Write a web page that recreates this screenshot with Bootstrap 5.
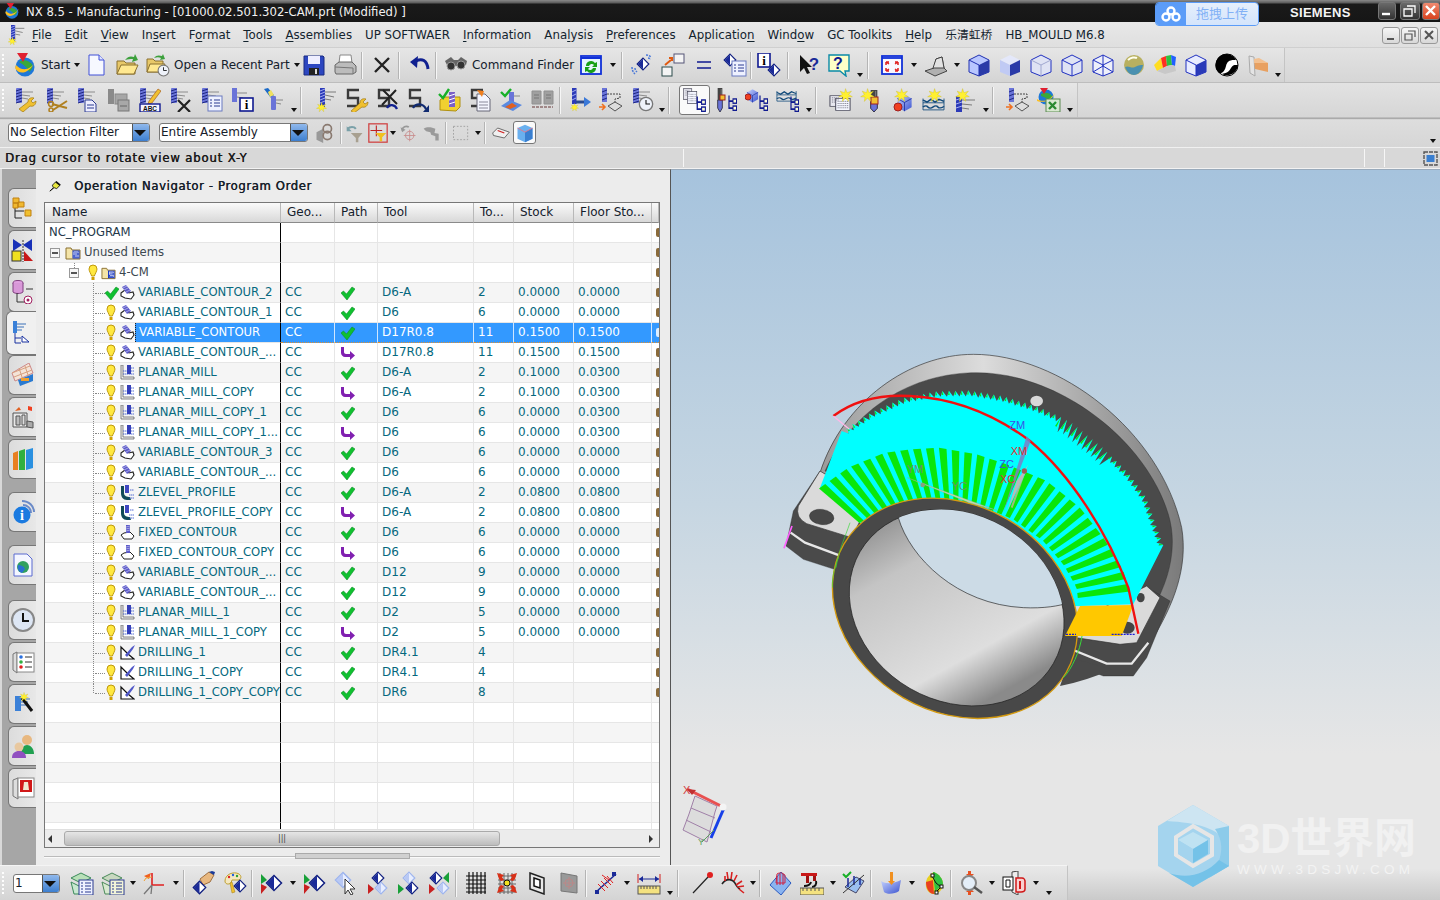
<!DOCTYPE html>
<html lang="en">
<head>
<meta charset="UTF-8">
<title>NX 8.5 - Manufacturing</title>
<link href="https://cdn.jsdelivr.net/npm/bootstrap@5.3.3/dist/css/bootstrap.min.css" rel="stylesheet">
<style>
  html, body { height: 900px; overflow: hidden; }
  body { font-family: "DejaVu Sans", "Noto Sans CJK SC", sans-serif; font-size: 11.65px; color: #222; background: #e2e2e2; position: relative; line-height: 1.2; }
  .shell { width: 1440px; height: 900px; }

  /* title bar */
  .titlebar { height: 22px; background: linear-gradient(#8a8a8a 0, #5a5a5a 3px, #1a1a1a 4px, #161616 100%); color: #f2f2f2; padding-left: 4px; position: relative; }
  .titlebar .ttl { margin-left: 6px; padding-top: 2px; }
  .baidu { position: absolute; left: 1155px; top: 2px; width: 104px; height: 24px; border-radius: 4px; overflow: hidden; border: 1px solid #5b9cf8; z-index: 5; }
  .baidu-ic { width: 30px; background: #5b9cf8; }
  .baidu-tx { background: linear-gradient(#e6effc, #d4e4fb); color: #82b1f6; font-size: 13px; }
  .brand { position: absolute; left: 1290px; top: 5px; font-family: "Liberation Sans", sans-serif; font-weight: 700; font-size: 13px; letter-spacing: .3px; color: #f4f4f4; }
  .winbtn { position: absolute; top: 2px; height: 18px; border-radius: 3px; background: linear-gradient(#6a6a6a, #333); border: 1px solid #777; }
  .winbtn.red { background: linear-gradient(#f08a70, #d8421e); }

  /* menu */
  .menubar { height: 26px; background: linear-gradient(#e8e8e8, #dfdfdf); border-bottom: 1px solid #cfcfcf; color: #13232e; padding: 1px 0 0 5px; position: relative; gap: 13px; font-size: 11.82px; }
  .menubar u { text-underline-offset: 2px; }
  .menu-ic { width: 22px; margin-right: -8px; }
  .mdi { position: absolute; top: 5px; width: 18px; height: 17px; border: 1px solid #999; border-radius: 3px; background: linear-gradient(#f6f6f6, #d8d8d8); }

  /* toolbars */
  .tb-row { height: 35px; background: linear-gradient(#e2e2e2, #d6d6d6); border-bottom: 1px solid #bdbdbd; }
  .tb-row.low { box-shadow: 0 1px 1px #aaa; position: relative; z-index: 1; height: 35px; }
  .tb { height: 100%; padding-left: 9px; border-right: 1px solid #c4c4c4; background: linear-gradient(#e6e6e6, #d4d4d4); position: relative; }
  .tb-grip { position: absolute; left: 2px; top: 6px; bottom: 6px; width: 3px; border-left: 2px dotted #fdfdfd; }
  .tbtn { width: 31px; height: 31px; flex: none; display: flex; align-items: center; justify-content: center; }
  .tbtn svg { width: 24px; height: 24px; }
  .tbtn.on { background: #fafafa; border: 1px solid #777; border-radius: 3px; height: 30px; }
  .tlabel { flex: none; color: #14202c; white-space: nowrap; font-size: 12px; letter-spacing: -.02px; }
  .tcaret { flex: none; display: flex; justify-content: center; align-items: flex-end; height: 24px; padding-bottom: 0; }
  .tcaret.mid { align-items: center; height: auto; }
  .tcaret::after { content: ""; border: 3.5px solid transparent; border-top: 4px solid #111; border-bottom: 0; }
  .tsep { flex: none; width: 6px; height: 27px; position: relative; }
  .tsep::after { content: ""; position: absolute; left: 2px; top: 0; bottom: 0; border-left: 1px solid #f6f6f6; box-shadow: -1px 0 0 #b4b4b4; }
  .w3 { width: 3px; } .w3::after { left: 1px; }
  .w8 { width: 8px; } .w8::after { left: 4px; }

  /* selection bar */
  .selbar { height: 30px; background: linear-gradient(#dedede, #d6d6d6); border-bottom: 1px solid #f0f0f0; padding-left: 8px; }
  .combo { height: 19px; background: #fff; border: 1px solid #777; border-radius: 3px; position: relative; padding: 0 1px; line-height: 17px; color: #16202a; overflow: hidden; font-size: 12px; }
  .combo::after { content: ""; position: absolute; right: 0; top: 0; bottom: 0; width: 17px; background: linear-gradient(#8fb8ec, #3d7fd0); border-left: 1px solid #555; }
  .combo::before { content: ""; position: absolute; right: 3px; top: 6px; z-index: 1; border: 6px solid transparent; border-top: 6px solid #111; border-bottom: 0; }
  .sbtn { height: 25px; flex: none; display: flex; align-items: center; justify-content: center; }
  .sbtn svg { width: 20px; height: 20px; }
  .sbtn.on { background: #fafafa; border: 1px solid #777; border-radius: 3px; height: 23px; }

  /* cue line */
  .cuebar { height: 21px; background: #d8d8d8; border-bottom: 1px solid #f2f2f2; padding-left: 5px; position: relative; }
  .cue { color: #1a1a1a; text-shadow: .4px 0 0 #1a1a1a; letter-spacing: .86px; }
  .cdiv { position: absolute; top: 1px; bottom: 1px; border-left: 1px solid #f6f6f6; }

  /* left strip */
  .main-row { height: 696px; }
  .side-strip { width: 36px; flex: none; background: #a6a6a6; border-left: 2px solid #d8d8d8; padding-top: 19px; }
  .stab { height: 40px; margin: 0 0 2px 6px; width: 28px; background: linear-gradient(90deg, #dcdcdc, #e8e8e8); border: 1px solid #777; border-right: 0; border-radius: 6px 0 0 6px; display: flex; align-items: center; justify-content: center; flex: none; }
  .stab svg { width: 24px; height: 24px; }
  .stab.active { width: 30px; margin: -3px 0 0 4px; height: 44px; background: #f0f0f0; }
  .stab.gap { margin-top: 11px; }
  .stab.gap2 { margin-top: 13px; }

  /* navigator panel */
  .nav-panel { width: 635px; flex: none; background: #ececec; border-right: 1px solid #555; border-top: 1px solid #999; padding: 0 10px 0 8px; }
  .nav-head { height: 32px; padding-left: 5px; }
  .nav-head b { font-weight: 400; text-shadow: .4px 0 0 #1a1a1a; color: #14202c; letter-spacing: .62px; margin-left: 13px; }
  .nav-frame { height: 646px; width: 616px; border: 1px solid #777; background: #fff; }
  .nav-scroll { height: 626px; overflow: hidden; }
  table.op-grid { table-layout: fixed; width: 614px; margin: 0; border-collapse: separate; border-spacing: 0; color: #05687e; font-size: 12px; }
  .op-grid th { height: 20px; padding: 0 0 0 6px; font-weight: 400; color: #14202c; vertical-align: middle; background: linear-gradient(#fafafa, #e6e6e6 60%, #d8d8d8); border-right: 1px solid #b8b8b8; border-bottom: 1px solid #8a8a8a; overflow: hidden; }
  .op-grid th:first-child { padding-left: 7px; }
  .op-grid td { height: 20px; padding: 0 0 0 4px; border-right: 1px solid #e6e6e6; border-bottom: 1px solid #e6e6e6; background: #fff; white-space: nowrap; overflow: hidden; position: relative; line-height: 19px; vertical-align: middle; }
  .op-grid tbody tr:nth-child(even) td { background: #f5f5f5; }
  .op-grid td.name { border-right: 1px solid #000; padding: 0; overflow: visible; font-size: 11.65px; }
  .op-grid td.ctr { padding-left: 6px; }
  .op-grid td.ctr svg { width: 14px; height: 14px; display: block; }
  .op-grid tbody tr.sel td { background: #3399ff; color: #fff; border-right-color: #cfe6ff; border-bottom: 1px dotted #e09030; }
  .op-grid tbody tr.sel td.name { background: #f5f5f5; border-bottom: 1px solid #e6e6e6; border-right-color: #000; }
  .nm { height: 19px; color: #05687e; }
  .hl { background: #3399ff; color: #fff; align-self: stretch; flex: 1; padding-left: 3px; margin-left: 0; border-left: 1px dotted #222; }
  .nm svg { flex: none; display: block; }
  .expd { width: 10px; height: 10px; flex: none; border: 1px solid #999; background: #f7f7f7; position: relative; }
  .expd::after { content: ""; position: absolute; left: 1px; right: 1px; top: 3px; border-top: 2px solid #555; }
  .lv3::before, .lv3::after, .lvc::after, .lvb::after { content: ""; position: absolute; }
  .lv3::before { left: 48px; top: 0; bottom: 0; border-left: 1px dotted #888; }
  .lv3.last::before { bottom: 50%; }
  .lv3::after { left: 50px; width: 10px; top: 50%; border-top: 1px dotted #888; }
  .lvb::after { left: 29px; top: 0; height: 5px; border-left: 1px dotted #888; }
  .endcap { display: block; width: 3px; height: 9px; margin: 0 0 0 -1px; border-radius: 2px 0 0 2px; background: #8a6a3a; }
  .sel .endcap { background: #ddeeff; }
  .op-grid td.endc { padding: 0 0 0 5px; border-right: 0; }

  .hscroll { height: 18px; background: #ececec; border-top: 1px solid #e0e0e0; position: relative; }
  .hthumb { position: absolute; left: 19px; width: 436px; top: 1px; bottom: 1px; border: 1px solid #aaa; border-radius: 3px; background: linear-gradient(#e6e6e6, #bdbdbd); font-size: 8px; text-align: center; line-height: 13px; color: #444; }
  .harr { position: absolute; top: 5px; border: 4px solid transparent; }
  .splitter { height: 17px; padding-top: 5px; position: relative; }
  .splitter::before { content: ""; position: absolute; left: 0; right: 0; top: 8px; border-top: 1px solid #bbb; border-bottom: 1px solid #fafafa; }
  .split-grip { position: absolute; left: 251px; width: 115px; height: 6px; top: 5px; background: #d0d0d0; border: 1px solid #aaa; }

  /* graphics window */
  .viewport { flex: 1; position: relative; background: linear-gradient(#a6c3dd, #c6d6e2 48%, #e6e6e6 84%); overflow: hidden; border-top: 1px solid #9ab; }
  .model { position: absolute; left: 99px; top: 171px; width: 420px; height: 390px; }
  .triad { position: absolute; left: 10px; top: 612px; width: 58px; height: 64px; }

  /* bottom */
  .bottom-row { height: 35px; }
  .bottom-tb { width: 1068px; flex: none; background: linear-gradient(#e8e8e8, #d4d4d4); border-top: 1px solid #f4f4f4; border-right: 1px solid #c4c4c4; padding-left: 13px; position: relative; }
  .bottom-rest { flex: 1; background: linear-gradient(#e6e6e6 10%, #cacaca); }
  .combo-s { width: 47px; margin-right: 6px; flex: none; }
  .watermark { position: absolute; left: 1157px; top: 805px; width: 270px; height: 84px; z-index: 4; pointer-events: none; }
  .wm-title { font-family: "Liberation Sans", "Noto Sans CJK SC", sans-serif; font-weight: 700; font-size: 42px; line-height: 46px; color: #f1f1f1; letter-spacing: -.2px; white-space: nowrap; }
  .wm-sub { font-family: "Liberation Sans", sans-serif; font-size: 13.5px; color: #f3f3f3; letter-spacing: 4.3px; white-space: nowrap; line-height: 16px; margin-top: 0; }
</style>
</head>
<body>

<svg width="0" height="0" class="position-absolute">
  <defs>
    <linearGradient id="gBlue" x1="0" y1="0" x2="1" y2="1"><stop offset="0" stop-color="#c7d4ff"/><stop offset="1" stop-color="#3c54d0"/></linearGradient>
    <linearGradient id="gYel" x1="0" y1="0" x2="1" y2="1"><stop offset="0" stop-color="#fff3b0"/><stop offset="1" stop-color="#e8b830"/></linearGradient>
    <linearGradient id="gGray" x1="0" y1="0" x2="1" y2="0"><stop offset="0" stop-color="#9a9a9a"/><stop offset=".45" stop-color="#dcdcdc"/><stop offset="1" stop-color="#7a7a7a"/></linearGradient>
    <linearGradient id="gBore" x1="0" y1="0" x2="1" y2=".5"><stop offset="0" stop-color="#777"/><stop offset=".35" stop-color="#c4c4c4"/><stop offset=".8" stop-color="#dedede"/><stop offset="1" stop-color="#8a8a8a"/></linearGradient>

    <!-- parts -->
    <symbol id="p-drill" viewBox="0 0 24 24"><rect x="3" y="0" width="6" height="15" rx="1" fill="#6a74d8"/><path d="M3 3l6-2M3 6l6-2M3 9l6-2M3 12l6-2M3 15l6-2" stroke="#1d2680"/><path d="M9 4h11M9 7l8 1M9 10l6 1" stroke="#8c8c8c"/></symbol>
    <symbol id="p-star" viewBox="0 0 24 24"><path d="M12 1l2.500 6.500 7-2.500-4.500 5.500 6 3.500-7 .5 1 7-5-5.500-5 5.500 1-7-7-.5 6-3.500L3.500 5l7 2.500z" fill="#fff030" stroke="#c8b820" stroke-width=".6"/></symbol>
    <symbol id="p-tree" viewBox="0 0 24 24" preserveAspectRatio="none"><path d="M6 2v18h8M6 10h8" fill="none" stroke="#101a90" stroke-width="2.400"/><rect x="14" y="7" width="7" height="6" fill="#ffffd8" stroke="#101a90" stroke-width="2"/><rect x="14" y="17" width="7" height="6" fill="#ffffd8" stroke="#101a90" stroke-width="2"/></symbol>
    <symbol id="p-s" viewBox="0 0 24 24"><path d="M14 2H3v8h10v8H2" fill="none" stroke="#3a3a3a" stroke-width="2.400"/></symbol>
    <symbol id="p-dia" viewBox="0 0 24 24"><path d="M12 2l10 10-10 10L2 12z" fill="#fff" stroke="#101f80" stroke-width="2"/><path d="M12 3L3 12l9 9z" fill="#1a2a98"/></symbol>
    <symbol id="p-dial" viewBox="0 0 24 24"><path d="M12 2l10 10-10 10L2 12z" fill="#e8eeff" stroke="#9db4ee" stroke-width="2"/><path d="M12 3L3 12l9 9z" fill="#b8c8f4"/></symbol>
    <symbol id="p-clock" viewBox="0 0 24 24"><circle cx="12" cy="12" r="10" fill="#eef2fa" stroke="#777" stroke-width="2"/><path d="M12 6v6h6" fill="none" stroke="#111" stroke-width="1.600"/></symbol>
    <symbol id="p-docs" viewBox="0 0 24 24" preserveAspectRatio="none"><rect x="1" y="1" width="13" height="15" fill="#e8e8f0" stroke="#445"/><rect x="7" y="5" width="15" height="17" fill="#f4f6ff" stroke="#445"/><path d="M3 4h8M3 7h8M3 10h3M9 9h11M9 12h11M9 15h11M9 18h11" stroke="#556" stroke-dasharray="1 1"/></symbol>
    <symbol id="p-tool" viewBox="0 0 24 24" preserveAspectRatio="none"><path d="M8 12h8v8l-4 4-4-4z" fill="#6a74d8" stroke="#223"/><rect x="8" y="0" width="8" height="12" fill="#444"/><path d="M14 1v10" stroke="#888"/></symbol>
    <symbol id="p-cube" viewBox="0 0 24 24"><path d="M3 7l9-5 9 5v11l-9 5-9-5z" fill="url(#gBlue)"/><path d="M3 7l9 5 9-5M12 12v11" stroke="#1a2a98" fill="none"/></symbol>
    <symbol id="p-wave" viewBox="0 0 24 24" preserveAspectRatio="none"><path d="M1 7l4 3 4-4 4 4 4-4 5 3M1 17q3-3 5 0t5 0 5 0 6-1" fill="none" stroke="#114a7a" stroke-width="1.800"/><path d="M1 11h21M1 21h21M1 5v16M22 5v16" stroke="#114a7a"/></symbol>

    <!-- row 1 -->
    <symbol id="i-start" viewBox="0 0 24 24"><circle cx="12" cy="14" r="9.500" fill="#1e78d8"/><path d="M6 9c4-3 9-2 13 2 1 3 0 6-3 8-1-4-5-7-10-10z" fill="#3aa83a"/><path d="M2 15c4 7 13 7 21-7-5 9-14 11-20 4z" fill="#ffc020"/><path d="M4 0h11l-5 9z" fill="#e02030"/></symbol>
    <symbol id="i-new" viewBox="0 0 24 24"><path d="M5 2h10l5 5v15H5z" fill="#f6f8ff" stroke="#4050d8"/><path d="M15 2v5h5" fill="#dfe4ff" stroke="#4050d8"/></symbol>
    <symbol id="i-open" viewBox="0 0 24 24"><path d="M2 21V8h7l2 2h9v11z" fill="#e8c868" stroke="#8a7030"/><path d="M2 21l4-9h17l-4 9z" fill="#ffe890" stroke="#8a7030"/><path d="M10 7c3-4 6-4 9-3l1-3 3 6-6 2 1-3c-3 0-5 0-8 1z" fill="#3ca03c"/></symbol>
    <symbol id="i-recent" viewBox="0 0 24 24"><path d="M1 19V6h6l2 2h8v11z" fill="#e8c868" stroke="#8a7030"/><path d="M1 19l3-8h15l-3 8z" fill="#ffe890" stroke="#8a7030"/><path d="M8 5c2-3 5-3 8-2l1-2 2 5-5 1 1-2c-2-1-4-1-7 0z" fill="#3ca03c"/><use href="#p-clock" x="11" y="11" width="13" height="13"/></symbol>
    <symbol id="i-save" viewBox="0 0 24 24"><path d="M2 3h19l1 1v18H2z" fill="#2c46c0" stroke="#182a80"/><rect x="6" y="3" width="12" height="8" fill="#eef"/><rect x="7" y="15" width="10" height="7" fill="#222"/><rect x="13" y="16" width="2" height="5" fill="#ddd"/></symbol>
    <symbol id="i-print" viewBox="0 0 24 24"><path d="M7 2h11l1 8H6z" fill="#fff" stroke="#888"/><path d="M2 12l4-3h13l4 4v6l-3 2H3l-1-2z" fill="#bcbcbc" stroke="#666"/><path d="M2 14l18 1v6" fill="none" stroke="#777"/></symbol>
    <symbol id="i-x" viewBox="0 0 24 24"><path d="M5 5l14 14M19 5L5 19" stroke="#222" stroke-width="2.400"/></symbol>
    <symbol id="i-undo" viewBox="0 0 24 24"><path d="M9 8c6-3 11-1 12 8" fill="none" stroke="#102090" stroke-width="3"/><path d="M11 3L3 9l7 6z" fill="#102090"/></symbol>
    <symbol id="i-find" viewBox="0 0 24 24"><path d="M1 8l6-4 3 3h4l3-3 6 4-1 4-5-2-2 4-6-2-1 3-5-3z" fill="#666"/><circle cx="7" cy="13" r="4" fill="#333" stroke="#999"/><circle cx="17" cy="12" r="4" fill="#333" stroke="#999"/></symbol>
    <symbol id="i-refresh" viewBox="0 0 24 24"><rect x="2" y="3" width="20" height="18" fill="#e6f4ff" stroke="#1030d8" stroke-width="1.800"/><path d="M2 5h20" stroke="#1030d8" stroke-width="2"/><path d="M7 13a5 5 0 0 1 9-3l2-1v5h-5l2-2a3 3 0 0 0-5 1zM17 15a5 5 0 0 1-9 3l-2 1v-5h5l-2 2a3 3 0 0 0 5-1z" fill="#18a018"/></symbol>
    <symbol id="i-vmove" viewBox="0 0 24 24"><use href="#p-dia" x="6" y="4" width="14" height="14"/><path d="M16 2c2 0 4 1 5 2M18 5c1 0 2 1 3 1M2 14c0 3 1 5 3 7M5 15c0 2 1 3 2 4" stroke="#4a78d8" stroke-width="1.500" fill="none" stroke-dasharray="2 1"/></symbol>
    <symbol id="i-swap" viewBox="0 0 24 24"><rect x="13" y="1" width="10" height="9" fill="#f4f4f4" stroke="#557"/><rect x="1" y="14" width="10" height="9" fill="#f4f4f4" stroke="#2a4a4a"/><path d="M4 12l6-5M8 5h3v3" stroke="#e05a10" stroke-width="2" fill="none"/></symbol>
    <symbol id="i-equal" viewBox="0 0 24 24"><path d="M5 9h14M5 15h14" stroke="#101a90" stroke-width="1.500"/></symbol>
    <symbol id="i-vlist" viewBox="0 0 24 24"><use href="#p-dia" x="0" y="0" width="14" height="14"/><rect x="9" y="8" width="14" height="15" fill="#eef1ff" stroke="#6a7ac0"/><path d="M11 12h2M11 15h2M11 18h2M15 12h6M15 15h6M15 18h6" stroke="#2a3a90"/></symbol>
    <symbol id="i-info" viewBox="0 0 24 24"><rect x="1" y="0" width="12" height="14" fill="#fff" stroke="#101a90" stroke-width="1.600"/><text x="7" y="12" text-anchor="middle" font-family="Liberation Serif" font-weight="700" font-size="13" fill="#000">i</text><use href="#p-dia" x="10" y="10" width="14" height="14"/></symbol>
    <symbol id="i-whatsthis" viewBox="0 0 24 24"><path d="M4 2v17l4-4 3 6 3-1-3-6h5z" fill="#111"/><text x="18" y="17" text-anchor="middle" font-family="Liberation Sans" font-weight="700" font-size="17" fill="#1a2a98">?</text></symbol>
    <symbol id="i-help" viewBox="0 0 24 24"><path d="M2 2h20v16h-4l1 5-6-5H2z" fill="#ffffc8" stroke="#0a8aa8" stroke-width="1.400"/><text x="11" y="16" text-anchor="middle" font-family="Liberation Sans" font-weight="700" font-size="16" fill="#101a90">?</text></symbol>
    <symbol id="i-fit" viewBox="0 0 24 24"><rect x="2" y="3" width="20" height="18" fill="#f8f8ff" stroke="#1030d8" stroke-width="1.800"/><path d="M2 5h20" stroke="#1030d8" stroke-width="1.800"/><path d="M6 9l3 2M6 9v3M6 9h3M18 9l-3 2M18 9v3M18 9h-3M6 18l3-2M6 18v-3M6 18h3M18 18l-3-2M18 18v-3M18 18h-3" stroke="#e02020" stroke-width="1.500" fill="none"/></symbol>
    <symbol id="i-hat" viewBox="0 0 24 24"><path d="M1 18l9-3 2-9 6-2 2 11 3 3-12 5z" fill="#b0b0b0" stroke="#444"/><path d="M9 15l3-9 6-2 2 11z" fill="#e2e2e2" stroke="#444"/></symbol>
    <symbol id="c-shade" viewBox="0 0 24 24"><path d="M2 7l10-5 10 5v12l-10 4-10-4z" fill="#b8c6ff" stroke="#2030b0"/><path d="M12 12l10-5v12l-10 4z" fill="#2a3aa8"/><path d="M2 7l10 5v11" fill="none" stroke="#2030b0"/></symbol>
    <symbol id="c-soft" viewBox="0 0 24 24"><path d="M2 7l10-5 10 5-10 5z" fill="#e4e8fa"/><path d="M2 7l10 5v11L2 19z" fill="#c0caf4"/><path d="M12 12l10-5v12l-10 4z" fill="#2a3aa8"/></symbol>
    <symbol id="c-wf1" viewBox="0 0 24 24"><path d="M2 7l10-5 10 5v12l-10 4-10-4z" fill="#dfe3f4" stroke="#2030c0"/><path d="M2 7l10 5 10-5M12 12v11" fill="none" stroke="#a0a8d0"/></symbol>
    <symbol id="c-wf2" viewBox="0 0 24 24"><path d="M2 7l10-5 10 5v12l-10 4-10-4z" fill="#dfe3f4" stroke="#2030c0"/><path d="M2 7l10 5 10-5M12 12v11" fill="none" stroke="#2030c0"/></symbol>
    <symbol id="c-wf3" viewBox="0 0 24 24"><path d="M2 7l10-5 10 5v12l-10 4-10-4z" fill="#eef0fa" stroke="#2030c0"/><path d="M2 7l10 5 10-5M12 12v11M12 2v11M2 19l10-6 10 6" fill="none" stroke="#2030c0"/></symbol>
    <symbol id="i-globe" viewBox="0 0 24 24"><circle cx="12" cy="12" r="10" fill="#b8b060"/><path d="M3 14c4-2 6 2 10 0s6-2 8-2c-1 6-5 10-9 10-4 0-7-3-9-8z" fill="#4a90b0"/><path d="M6 7c3-3 7-3 9-2" stroke="#ffe" fill="none" stroke-width="2"/></symbol>
    <symbol id="i-rainbow" viewBox="0 0 24 24"><path d="M1 12L8 5l2 10-6 3z" fill="#ffdd20"/><path d="M8 5l5-2 1 10-4 2z" fill="#ff3020"/><path d="M13 3l5-1 1 10-5 1z" fill="#30c040"/><path d="M18 2l5 2-1 9-3-1z" fill="#2060ff"/><path d="M4 18l6-3 4-2 5-1 3 1 1 5-11 3z" fill="#c8c8c8"/></symbol>
    <symbol id="c-half" viewBox="0 0 24 24"><path d="M2 7l10-5 10 5v12l-10 4-10-4z" fill="#e8ecff" stroke="#2030c0"/><path d="M12 12l10-5v12l-10 4z" fill="#2a3ab8"/><path d="M2 7l10 5v11" fill="none" stroke="#2030c0"/></symbol>
    <symbol id="i-yinyang" viewBox="0 0 24 24"><circle cx="12" cy="12" r="11" fill="#fff" stroke="#000" stroke-width="1"/><path d="M12 1a11 11 0 0 0-8 19c4 1 6-3 7-7s3-6 8-6 2-1 2 0A11 11 0 0 0 12 1z" fill="#000"/><path d="M23 12a11 11 0 0 1-16 9c4-1 7-2 9-6s5-3 7-3z" fill="#000"/></symbol>
    <symbol id="i-clip" viewBox="0 0 24 24"><path d="M3 3l5 1 1 19-5-3z" fill="#e4e4e4" stroke="#aaa"/><path d="M8 6l14 4v9L9 16z" fill="#e8a060"/><path d="M8 6l5-1 9 5-14 0z" fill="#f2c090"/></symbol>

    <!-- row 2 -->
    <symbol id="i-d-wrench" viewBox="0 0 24 24"><use href="#p-drill" width="24" height="24"/><path d="M6 21l9-7c0-3 2-5 6-4l-3 3 2 2 3-2c0 4-3 6-6 5l-7 6z" fill="#f0c030" stroke="#a07a10" stroke-width=".7"/></symbol>
    <symbol id="i-d-scissors" viewBox="0 0 24 24"><use href="#p-drill" width="24" height="24"/><path d="M8 16l15 4M9 22l14-9" stroke="#b08020" stroke-width="2"/><circle cx="7" cy="16" r="2.400" fill="none" stroke="#b08020" stroke-width="1.500"/><circle cx="7" cy="22" r="2" fill="none" stroke="#b08020" stroke-width="1.500"/></symbol>
    <symbol id="i-d-copy" viewBox="0 0 24 24"><use href="#p-drill" width="24" height="24"/><path d="M10 12h7l4 4v8H10z" fill="#eef" stroke="#2a3a90"/><path d="M12 17h7M12 20h7" stroke="#2a3a90"/></symbol>
    <symbol id="i-graydocs" viewBox="0 0 24 24"><rect x="2" y="1" width="6" height="15" fill="#8a8a8a"/><rect x="9" y="6" width="12" height="10" fill="#a6a6a6" stroke="#888"/><rect x="12" y="12" width="11" height="11" fill="#a8a8a8" stroke="#777"/><path d="M14 18h7" stroke="#666"/></symbol>
    <symbol id="i-d-edit" viewBox="0 0 24 24"><use href="#p-drill" width="24" height="24"/><path d="M12 13L21 1l3 2-9 12-4 1z" fill="#f0c030" stroke="#a05010" stroke-width=".6"/><rect x="3" y="16" width="20" height="8" fill="#f4f4ff" stroke="#101a90" stroke-width="1.400"/><text x="13" y="23" text-anchor="middle" font-family="Liberation Sans" font-weight="700" font-size="6.500" fill="#111">ABC</text></symbol>
    <symbol id="i-d-x" viewBox="0 0 24 24"><use href="#p-drill" width="24" height="24"/><path d="M10 12l12 12M22 12L10 24" stroke="#222" stroke-width="2.200"/></symbol>
    <symbol id="i-d-list" viewBox="0 0 24 24"><use href="#p-drill" width="24" height="24"/><rect x="9" y="8" width="14" height="15" fill="#eef1ff" stroke="#6a7ac0"/><path d="M11 12h2M11 15h2M11 18h2M15 12h6M15 15h6M15 18h6" stroke="#2a3a90"/></symbol>
    <symbol id="i-d-info" viewBox="0 0 24 24"><rect x="2" y="0" width="5" height="14" fill="#6a74d8"/><path d="M7 5h10M7 9l6 1" stroke="#888"/><rect x="10" y="10" width="13" height="13" fill="#fff" stroke="#101a90" stroke-width="1.600"/><text x="16.500" y="21" text-anchor="middle" font-family="Liberation Serif" font-weight="700" font-size="13" fill="#000">i</text></symbol>
    <symbol id="i-torch" viewBox="0 0 24 24"><path d="M3 1l4-1 6 7-3 3z" fill="#1a6ac8"/><path d="M7 4l3-2 3 5-4 2z" fill="#f0e060"/><rect x="10" y="8" width="5" height="14" rx="1" fill="#6a74d8"/><path d="M15 12h7M15 15l5 1" stroke="#888"/></symbol>
    <symbol id="i-d-star" viewBox="0 0 24 24"><rect x="6" y="0" width="5" height="19" fill="#2c3ab8"/><path d="M6 3l5-2M6 6l5-2M6 9l5-2M6 12l5-2M6 15l5-2" stroke="#a4aef0"/><path d="M11 4h11M11 7l9 2M11 11l6 1" stroke="#7a7a7a"/><use href="#p-star" x="1" y="14" width="13" height="11"/></symbol>
    <symbol id="i-s-wrench" viewBox="0 0 24 24"><use href="#p-s" width="24" height="24"/><path d="M6 23l9-8c0-3 2-5 6-4l-3 3 2 2 3-2c0 4-3 6-6 5l-8 6z" fill="#f0c030" stroke="#a07a10" stroke-width=".7"/></symbol>
    <symbol id="i-s-x" viewBox="0 0 24 24"><use href="#p-s" width="24" height="24"/><path d="M7 2l14 14M20 2L6 17" stroke="#222" stroke-width="2"/><path d="M11 20c2-4 8-4 10 1" stroke="#102090" stroke-width="2.200" fill="none"/></symbol>
    <symbol id="i-s-redo" viewBox="0 0 24 24"><use href="#p-s" width="24" height="24"/><path d="M6 20c3-5 10-5 13 1" stroke="#102a70" stroke-width="2.200" fill="none"/><path d="M22 17v7h-6z" fill="#102a70"/></symbol>
    <symbol id="i-check-box" viewBox="0 0 24 24"><path d="M2 22V12l4-3h16v10l-4 4z" fill="#f0d030" stroke="#b09010"/><rect x="11" y="4" width="6" height="15" fill="#7a60c8"/><path d="M11 8l6-2M11 12l6-2M11 16l6-2" stroke="#fff"/><path d="M1 6l4 4 6-9" fill="none" stroke="#18b028" stroke-width="2.400"/></symbol>
    <symbol id="i-s-doc" viewBox="0 0 24 24"><use href="#p-s" width="24" height="24"/><path d="M8 6h8l5 5v12H8z" fill="#f4f6ff" stroke="#667"/><path d="M10 14h9M10 17h9M10 20h9" stroke="#889"/><path d="M8 2l7 1-2 6" fill="#f08020"/></symbol>
    <symbol id="i-check-part" viewBox="0 0 24 24"><rect x="9" y="4" width="5" height="12" fill="#6a74d8"/><path d="M14 8h6" stroke="#888"/><path d="M1 18l9-6 12 5-9 6z" fill="#5a8ae0"/><path d="M5 19l7-4 5 3-7 3z" fill="#e06020"/><path d="M1 4l4 4 6-7" fill="none" stroke="#18b028" stroke-width="2.400"/></symbol>
    <symbol id="i-graybook" viewBox="0 0 24 24"><path d="M1 3h9v13H1zM13 3h9v13h-9z" fill="#a0a0a0" stroke="#909090"/><path d="M1 19h21" stroke="#a08888" stroke-width="2" stroke-dasharray="3 1"/><path d="M3 7h5M3 10h5M15 7h5M15 10h5" stroke="#777"/></symbol>
    <symbol id="i-d-arrow" viewBox="0 0 24 24"><rect x="4" y="0" width="4.500" height="16" fill="#2c3ab8"/><path d="M4 4l4-2M4 8l4-2M4 12l4-2" stroke="#a4aef0"/><path d="M8 14h8" stroke="#2a4a90" stroke-width="3"/><path d="M16 9l7 5-7 5z" fill="#3a78d8"/><use href="#p-star" x="1" y="15" width="11" height="9"/></symbol>
    <symbol id="i-d-mach" viewBox="0 0 24 24"><rect x="3" y="0" width="5" height="14" fill="#6a74d8"/><path d="M3 4l5-2M3 8l5-2M3 12l5-2" stroke="#1d2680"/><path d="M8 6h13v4l-5 1v5" fill="none" stroke="#444" stroke-dasharray="2 1"/><path d="M9 18l7-4 7 4-7 5z" fill="#ddd" stroke="#555"/><path d="M0 19h6M3 16l3 3-3 3" stroke="#f07020" stroke-width="1.600" fill="none"/></symbol>
    <symbol id="i-d-clock" viewBox="0 0 24 24"><use href="#p-drill" width="24" height="24"/><use href="#p-clock" x="8" y="8" width="16" height="16"/></symbol>
    <symbol id="i-op-docs" viewBox="0 0 24 24"><use href="#p-docs" width="15" height="17"/><use href="#p-tree" x="11" y="7" width="13" height="17"/></symbol>
    <symbol id="i-op-tool" viewBox="0 0 24 24"><use href="#p-tool" x="-1" width="14" height="24"/><rect x="6" y="7" width="5" height="5" fill="#f0c030" stroke="#a02020"/><use href="#p-tree" x="12" y="6" width="12" height="17"/></symbol>
    <symbol id="i-op-cube" viewBox="0 0 24 24"><use href="#p-cube" width="15" height="15"/><circle cx="3" cy="9" r="3" fill="#f04020" stroke="#a02020"/><use href="#p-tree" x="12" y="6" width="12" height="17"/></symbol>
    <symbol id="i-op-wave" viewBox="0 0 24 24"><use href="#p-wave" width="22" height="15"/><use href="#p-tree" x="12" y="7" width="12" height="17"/></symbol>
    <symbol id="i-st-docs" viewBox="0 0 24 24"><use href="#p-docs" y="7" width="23" height="17"/><use href="#p-star" x="9" y="0" width="15" height="15"/></symbol>
    <symbol id="i-st-tool" viewBox="0 0 24 24"><use href="#p-tool" x="4" y="2" width="20" height="22"/><rect x="11" y="9" width="7" height="7" fill="#f0c030" stroke="#a02020"/><use href="#p-star" x="0" y="0" width="15" height="15"/></symbol>
    <symbol id="i-st-cube" viewBox="0 0 24 24"><use href="#p-cube" x="4" y="5" width="19" height="19"/><circle cx="7" cy="19" r="4" fill="#f04020" stroke="#a02020"/><use href="#p-star" x="3" y="0" width="15" height="15"/></symbol>
    <symbol id="i-st-wave" viewBox="0 0 24 24"><use href="#p-wave" y="7" width="24" height="17"/><use href="#p-star" x="5" y="0" width="15" height="15"/></symbol>
    <symbol id="i-st-drill" viewBox="0 0 24 24"><rect x="3" y="8" width="6" height="16" fill="#2c3ab8"/><path d="M3 12l6-2M3 16l6-2M3 20l6-2" stroke="#a4aef0"/><path d="M9 12h13M9 16l10 1M9 20l7 1" stroke="#7a7a7a"/><use href="#p-star" x="2" y="0" width="15" height="15"/></symbol>
    <symbol id="i-globe-xl" viewBox="0 0 24 24"><circle cx="9" cy="9" r="7.500" fill="#1e78d8"/><path d="M4 6c4-2 8-2 11 2l-1 6C11 11 8 9 4 8z" fill="#3aa83a"/><path d="M0 11c4 3 12 3 18-6-4 9-13 10-18 8z" fill="#ffc020"/><path d="M3 0h8L7 6z" fill="#e02030"/><rect x="9" y="11" width="14" height="13" fill="#d8e8d0" stroke="#5a8a50"/><path d="M12 14l7 7M19 14l-7 7" stroke="#2a8a30" stroke-width="2.400"/></symbol>

    <!-- row 3 -->
    <symbol id="i-s-link" viewBox="0 0 24 24"><path d="M3 20v-9l8-4v17z" fill="#999"/><circle cx="16" cy="7" r="5" fill="none" stroke="#8a7a70" stroke-width="2"/><circle cx="16" cy="15" r="5" fill="none" stroke="#8a7a70" stroke-width="2"/></symbol>
    <symbol id="i-s-fil" viewBox="0 0 24 24"><path d="M3 7c3-3 8-3 10 0" fill="none" stroke="#7aa0a8" stroke-width="2.400"/><path d="M2 4v6h6z" fill="#7aa0a8"/><path d="M7 12h14l-5 6v5h-3v-5z" fill="#a8a090"/></symbol>
    <symbol id="i-s-box" viewBox="0 0 24 24"><rect x="1" y="1" width="22" height="22" fill="none" stroke="#d04040" stroke-width="1.500"/><path d="M10 3v13M3 9h14" stroke="#c02020" stroke-width="1.300"/><path d="M9 12h13l-5 5v5h-3v-5z" fill="#f0c020"/></symbol>
    <symbol id="i-s-cross" viewBox="0 0 24 24"><path d="M5 9a5 5 0 0 1 8-4" stroke="#999" stroke-width="2" fill="none"/><path d="M3 5l2 6 4-3z" fill="#999"/><circle cx="14" cy="15" r="5" fill="none" stroke="#c88a8a"/><path d="M14 8v14M7 15h14" stroke="#c88a8a"/></symbol>
    <symbol id="i-s-wave" viewBox="0 0 24 24"><path d="M2 7c4-3 10-2 14 0l-1 5 5 1v8h-4v-5l-5-2-1-3-5-1z" fill="#9a9a9a"/></symbol>
    <symbol id="i-s-rect" viewBox="0 0 24 24"><rect x="3" y="4" width="17" height="16" fill="none" stroke="#999" stroke-dasharray="2 2"/></symbol>
    <symbol id="i-s-snap" viewBox="0 0 24 24"><path d="M2 12l6-6 14 5-6 7-13-3z" fill="#f0f0f0" stroke="#555"/><path d="M8 9l8 3" stroke="#d02020" stroke-width="1.600"/></symbol>
    <symbol id="i-s-cube" viewBox="0 0 24 24"><path d="M3 6l9-4 9 4v13l-9 4-9-4z" fill="#6ab0ef"/><path d="M12 11l9-5v13l-9 4z" fill="#3a7fd0"/><path d="M3 6l9 5 9-5" fill="none" stroke="#f07080"/></symbol>

    <!-- side tabs -->
    <symbol id="t-geo" viewBox="0 0 24 24"><path d="M4 5v17h7M4 15h9" stroke="#222" fill="none"/><path d="M2 2h6v5H2zM7 6h6v5H7zM2 7h5v5H2z" fill="#f0b830" stroke="#c08010"/><path d="M14 14h6v6h-6z" fill="#f0c030" stroke="#c08010"/></symbol>
    <symbol id="t-con" viewBox="0 0 24 24"><path d="M2 1l9 6-9 6zM21 1l-9 6 9 6z" fill="#1830b8"/><rect x="1" y="13" width="9" height="10" fill="#f0e020" stroke="#333"/><path d="M13 13l9 10h-9z" fill="#c81818"/><path d="M12 2v22" stroke="#333" stroke-dasharray="2 1"/></symbol>
    <symbol id="t-db" viewBox="0 0 24 24"><ellipse cx="7" cy="3" rx="5" ry="2.500" fill="#e0a0e0" stroke="#804080"/><path d="M2 3v9c2 2 8 2 10 0V3" fill="#d898d8" stroke="#804080"/><path d="M6 13v9h8" fill="none" stroke="#333"/><circle cx="17" cy="20" r="4" fill="#fff" stroke="#a02060"/><circle cx="17" cy="20" r="1.500" fill="#a02060"/><path d="M15 9h7" stroke="#333"/></symbol>
    <symbol id="t-ops" viewBox="0 0 24 24"><rect x="3" y="0" width="4" height="12" fill="#3a80d8"/><path d="M7 3h9M7 6h7M7 9h5" stroke="#3a70b8"/><path d="M5 12v10h6M5 17h6" stroke="#1830a0" fill="none"/><path d="M12 15v6h7z" fill="#fff" stroke="#1830a0"/></symbol>
    <symbol id="t-grid" viewBox="0 0 24 24"><path d="M1 10L18 0l4 10-18 8z" fill="#f4e4d8" stroke="#c88"/><path d="M1 10l18-7M3 14l18-7M8 5l4 12M14 3l4 12" stroke="#d8a080"/><path d="M7 17l15-6v7L9 23z" fill="#2a7ad0"/><rect x="10" y="15" width="8" height="3" fill="#f0a030"/></symbol>
    <symbol id="t-mach" viewBox="0 0 24 24"><path d="M2 8h14v14H2z" fill="#e8e8e8" stroke="#555"/><path d="M5 11h4v9H5z" fill="#bbb" stroke="#555"/><path d="M11 10h3v10h-3z" fill="#ddd" stroke="#555"/><path d="M16 16l6 1v6l-6-1z" fill="#aaa" stroke="#555"/><path d="M4 6l4-4 2 3z" fill="#e06020"/><path d="M17 1l4 1v4l-4-1z" fill="#f04020"/></symbol>
    <symbol id="t-books" viewBox="0 0 24 24"><path d="M2 6l5-2v19H2z" fill="#e88020"/><path d="M8 4l6-2v21H8z" fill="#30b040"/><path d="M15 3l7-2v20l-7 2z" fill="#2a90e0"/></symbol>
    <symbol id="t-info" viewBox="0 0 24 24"><path d="M11 1c7 0 12 5 12 11" fill="none" stroke="#6a8ac8" stroke-width="2"/><path d="M12 5c4 0 8 3 8 8" fill="none" stroke="#6a8ac8" stroke-width="2"/><circle cx="11" cy="15" r="8.500" fill="#1a7ae0"/><text x="11" y="20" text-anchor="middle" font-family="Liberation Serif" font-weight="700" font-size="14" fill="#fff">i</text></symbol>
    <symbol id="t-web" viewBox="0 0 24 24"><path d="M3 1h13l5 5v17H3z" fill="#f4f6ff" stroke="#5a6ad0"/><circle cx="12" cy="14" r="6" fill="#30a060"/><path d="M7 12c3 0 6 1 7 4l-3 4c-3-1-5-4-4-8z" fill="#2a70d0"/></symbol>
    <symbol id="t-clock" viewBox="0 0 24 24"><circle cx="12" cy="12" r="11" fill="#dde6f4" stroke="#888" stroke-width="2"/><path d="M12 5v8h6" fill="none" stroke="#111" stroke-width="2"/></symbol>
    <symbol id="t-door" viewBox="0 0 24 24"><path d="M2 4l4-2v21l-4-3z" fill="#ddd" stroke="#777"/><rect x="6" y="3" width="17" height="19" fill="#fff" stroke="#888"/><circle cx="10" cy="7" r="1.800" fill="#2a70e0"/><circle cx="10" cy="12" r="1.800" fill="#30b040"/><circle cx="10" cy="17" r="1.800" fill="#e02020"/><path d="M14 7h7M14 12h7M14 17h7" stroke="#333"/></symbol>
    <symbol id="t-wiz" viewBox="0 0 24 24"><rect x="4" y="4" width="6" height="15" fill="#3a80d8"/><path d="M10 7h9M10 10h7M10 13h5" stroke="#3a70b8"/><path d="M11 6l10 13" stroke="#111" stroke-width="3"/><use href="#p-star" x="8" y="0" width="10" height="10"/></symbol>
    <symbol id="t-people" viewBox="0 0 24 24"><circle cx="16" cy="6" r="5" fill="#e8b880"/><path d="M10 20c0-6 3-9 6-9s7 3 7 9z" fill="#20a050"/><circle cx="8" cy="13" r="4.500" fill="#e8c8a0"/><path d="M1 24c0-5 3-7 7-7s7 2 7 7z" fill="#9050c0"/></symbol>
    <symbol id="t-roll" viewBox="0 0 24 24"><path d="M2 4l5-2v21l-5-3z" fill="#ddd" stroke="#777"/><rect x="7" y="2" width="16" height="19" fill="#fff" stroke="#888"/><rect x="9" y="4" width="12" height="12" fill="#d01818"/><path d="M13 6h4l1 8h-6z" fill="#f0e8d0"/></symbol>

    <!-- bottom -->
    <symbol id="b-layers" viewBox="0 0 24 24"><path d="M1 7l10-5 10 5-10 5z" fill="#b8e0b8" stroke="#3a8a5a"/><path d="M1 11l10 5 1 7H4z" fill="#c8e8d0" stroke="#3a8a5a"/><rect x="9" y="9" width="14" height="15" fill="#eef1ff" stroke="#2a3a90"/><path d="M11 12h2M11 15h2M11 18h2M11 21h2M15 12h6M15 15h6M15 18h6M15 21h6" stroke="#2a3a90"/></symbol>
    <symbol id="b-layers2" viewBox="0 0 24 24"><path d="M1 7l10-5 10 5-10 5z" fill="#c8d8c0" stroke="#4a8a5a"/><path d="M1 11l10 5 1 7H4z" fill="#d8e8d0" stroke="#4a8a5a"/><rect x="9" y="9" width="14" height="15" fill="#f2f4d8" stroke="#2a3a90"/><path d="M11 12h2M11 15h2M11 18h2M11 21h2M15 12h6M15 15h6M15 18h6M15 21h6" stroke="#2a3a90"/></symbol>
    <symbol id="b-wcs" viewBox="0 0 24 24"><path d="M10 14V2M10 14h12" stroke="#e02020" stroke-width="1.600" fill="none"/><path d="M10 14L2 23M10 14l-1 9" stroke="#777" stroke-width="1.300"/><path d="M2 5l7-3-2 6z" fill="#f06020"/><path d="M2 10l2-3 6-1" stroke="#f0a030" fill="none"/></symbol>
    <symbol id="b-hand" viewBox="0 0 24 24"><path d="M8 8l9-7 5 3-4 7-7 3z" fill="#e8b880" stroke="#a07040"/><path d="M17 1l5 3 1-3-3-1z" fill="#1a3a98"/><use href="#p-dia" x="0" y="9" width="15" height="15"/></symbol>
    <symbol id="b-palette" viewBox="0 0 24 24"><path d="M2 10C2 3 11 0 16 3c3 2 2 5 0 6H9l-1 3c-3 2-6 1-6-2z" fill="#f4e8c0" stroke="#c0a030"/><circle cx="6" cy="6" r="1.200" fill="#e02020"/><circle cx="10" cy="4" r="1.200" fill="#2060e0"/><circle cx="14" cy="5" r="1.200" fill="#30a030"/><use href="#p-dia" x="10" y="8" width="14" height="14"/><path d="M7 12l2 10 3-1-3-10z" fill="#f0c030" stroke="#a07a10" stroke-width=".5"/></symbol>
    <symbol id="b-t1" viewBox="0 0 24 24"><use href="#p-dia" x="5" y="3" width="18" height="18"/><path d="M1 3l6 6-6 4z" fill="#18a038"/><path d="M1 13l6 3-6 7z" fill="#c82020"/></symbol>
    <symbol id="b-cursor" viewBox="0 0 24 24"><use href="#p-dial" x="0" y="0" width="18" height="18"/><path d="M11 8v15l3-4 3 5 2-1-3-5h5z" fill="#fff" stroke="#333"/></symbol>
    <symbol id="b-t2" viewBox="0 0 24 24"><use href="#p-dia" x="6" y="0" width="14" height="14"/><use href="#p-dial" x="9" y="10" width="14" height="14"/><path d="M3 13l6 5-6 5z" fill="#c82020"/></symbol>
    <symbol id="b-t3" viewBox="0 0 24 24"><use href="#p-dial" x="6" y="0" width="14" height="14"/><use href="#p-dia" x="9" y="10" width="14" height="14"/><path d="M2 13l6 5-6 5z" fill="#18a038"/></symbol>
    <symbol id="b-t4" viewBox="0 0 24 24"><use href="#p-dia" x="2" y="0" width="14" height="14"/><use href="#p-dial" x="9" y="10" width="14" height="14"/><path d="M22 1v11l-6-5z" fill="#18a038"/><path d="M2 13l6 5-6 5z" fill="#c82020"/></symbol>
    <symbol id="b-grid" viewBox="0 0 24 24"><path d="M2 5h20M2 9h20M2 13h20M2 17h20M2 21h20M5 1v22M9 1v22M13 1v22M17 1v22M21 1v22" stroke="#111" stroke-width="1.200"/></symbol>
    <symbol id="b-rgrid" viewBox="0 0 24 24"><path d="M3 5h18M3 9h18M3 13h18M3 17h18M3 21h18M5 2v21M9 2v21M13 2v21M17 2v21" stroke="#666" stroke-width="1"/><path d="M2 2l7 2-2 2 2 3-3 1-2-2zM22 2l-7 2 2 2-2 3 3 1 2-2zM2 22l7-2-2-2 2-3-3-1-2 2zM22 22l-7-2 2-2-2-3 3-1 2 2z" fill="#d83018"/><circle cx="12" cy="12" r="3" fill="#f0e020" stroke="#111"/></symbol>
    <symbol id="b-frame" viewBox="0 0 24 24"><path d="M4 2l14 5v16L4 18z" fill="#e8e8e8" stroke="#222" stroke-width="1.500"/><path d="M8 7l6 2v8l-6-2z" fill="#fff" stroke="#111" stroke-width="1.500"/></symbol>
    <symbol id="b-frameg" viewBox="0 0 24 24"><path d="M4 2l16 3v17L4 20z" fill="#999" stroke="#777"/><circle cx="12" cy="12" r="4" fill="none" stroke="#b88"/><path d="M12 6v12M6 12h12" stroke="#b88"/></symbol>
    <symbol id="b-hatch" viewBox="0 0 24 24"><path d="M2 21L22 3" stroke="#1a2a98" stroke-width="1.500"/><path d="M4 13l7 7M7 10l7 7M10 7l7 7M13 5l6 7M8 4l7 5" stroke="#e02020"/><rect x="1" y="19" width="4" height="4" fill="#1a2a98"/><rect x="18" y="1" width="4" height="4" fill="#1a2a98"/></symbol>
    <symbol id="b-dim" viewBox="0 0 24 24"><path d="M1 3v9M23 3v9" stroke="#d02020"/><path d="M2 8h20" stroke="#1a2a98"/><path d="M6 5L2 8l4 3zM18 5l4 3-4 3z" fill="#1a2a98"/><rect x="1" y="15" width="22" height="8" fill="#f4e280" stroke="#555"/><path d="M4 15v3M7 15v3M10 15v3M13 15v3M16 15v3M19 15v3" stroke="#555"/></symbol>
    <symbol id="b-line" viewBox="0 0 24 24"><path d="M3 22L19 5" stroke="#222" stroke-width="1.200"/><circle cx="20" cy="4" r="3" fill="#e02020"/></symbol>
    <symbol id="b-lash" viewBox="0 0 24 24"><path d="M1 13c4-6 11-6 14 1 1 2 2 3 4 4" fill="none" stroke="#222" stroke-width="1.600"/><path d="M4 10V5M7 8l-1-7M10 8l1-7M13 10l3-6M15 14l6-4M16 16l7-1M18 18l5 4" stroke="#d82020" stroke-width="1.600"/></symbol>
    <symbol id="b-surf" viewBox="0 0 24 24"><path d="M12 1l10 11-10 12L1 14z" fill="#8ab4f0" stroke="#2a5ac0"/><path d="M8 3c3-2 6-1 8 1v8H7zM8 5v9M11 3v11M14 3v11" fill="none" stroke="#d02040" stroke-width="1"/></symbol>
    <symbol id="b-clamp" viewBox="0 0 24 24"><path d="M1 2h16v3H1z" fill="#c81818"/><path d="M6 5h3v7H6zM13 5h3v5h-3z" fill="#a01010"/><path d="M4 15c2 0 6 0 7-4M16 10c1 3-1 6-4 6" stroke="#111" stroke-width="2" fill="none"/><rect x="0" y="17" width="24" height="7" fill="#f4e280" stroke="#555"/><path d="M3 17v3M7 17v3M11 17v3M15 17v3M19 17v3" stroke="#555"/></symbol>
    <symbol id="b-vec" viewBox="0 0 24 24"><path d="M3 16L14 6l8 4-8 12z" fill="#9ac0f0" stroke="#446"/><path d="M6 16V7M12 14V5M18 14V7" stroke="#1a2a98" stroke-width="1.500"/><path d="M1 22L22 4" stroke="#333"/><path d="M1 3l3 3 5-5" fill="none" stroke="#18b028" stroke-width="2"/></symbol>
    <symbol id="b-cup" viewBox="0 0 24 24"><path d="M2 10c6 4 14 2 20-1l-2 11c-4 3-12 4-15 1z" fill="url(#gBlue)"/><path d="M11 1h3v9l2 0-3.500 4L9 10h2z" fill="#f09020"/></symbol>
    <symbol id="b-rain" viewBox="0 0 24 24"><path d="M12 1c5 2 9 7 9 12 0 6-5 10-9 10C6 23 3 17 4 11 5 6 8 3 12 1z" fill="#e8d020"/><path d="M12 1c5 2 9 7 9 12l-8 8-2-20z" fill="#30c040"/><path d="M4 11c0 6 3 12 8 12l-1-14z" fill="#e84020"/><path d="M10 5l4 7 5 4-5 5" fill="none" stroke="#111"/><rect x="9" y="3" width="3" height="3" fill="#fff" stroke="#111"/><rect x="18" y="14" width="3" height="3" fill="#fff" stroke="#111"/><rect x="13" y="20" width="3" height="3" fill="#fff" stroke="#111"/></symbol>
    <symbol id="b-mag" viewBox="0 0 24 24"><path d="M9 0h3v3h3l-4 4-4-4h2zM9 24h3v-3h3l-4-4-4 4h2z" fill="#e85020"/><circle cx="10" cy="12" r="7" fill="#e4eef8" stroke="#888" stroke-width="2"/><path d="M15 16l8 6" stroke="#555" stroke-width="2.500"/></symbol>
    <symbol id="b-sect" viewBox="0 0 24 24"><path d="M10 1l6-1v24l-6-3z" fill="#eee" stroke="#444"/><rect x="1" y="6" width="10" height="13" fill="#fff" stroke="#111"/><path d="M4 9h4v7H4z" fill="none" stroke="#111"/><path d="M14 7h6c2 0 3 2 3 3v8c0 2-2 3-4 3h-5z" fill="#f8d0d0" stroke="#d01818" stroke-width="1.500"/><path d="M18 10v8" stroke="#d01818" stroke-width="2"/></symbol>

    <!-- tree -->
    <symbol id="n-bulb" viewBox="0 0 10 17"><path d="M5 1a4 4 0 0 1 4 4c0 2-2 5-2.600 7H3.600C3 10 1 7 1 5a4 4 0 0 1 4-4z" fill="#ffe840" stroke="#b89000" stroke-width=".9"/><rect x="3.500" y="13" width="3" height="3" fill="#d0a000"/></symbol>
    <symbol id="n-check" viewBox="0 0 14 14"><path d="M0 7l2.500-2L5.500 8 11 1l3 2-8 11z" fill="#10c030" stroke="#0a9028" stroke-width=".6"/></symbol>
    <symbol id="n-ret" viewBox="0 0 14 14"><path d="M0 1h3v5c0 1 1 2 2 2h4V5l5 4.500L9 14v-3H4C2 11 0 9 0 7z" fill="#8020b0"/></symbol>
    <symbol id="n-folder" viewBox="0 0 16 14"><path d="M1 2h5l1 2h8v9H1z" fill="#f4e4a8" stroke="#8a7030"/><rect x="8" y="5" width="6" height="7" fill="#fff" stroke="#1030c0"/><path d="M9 7h4v2H9v2h4" fill="none" stroke="#1030c0"/></symbol>
    <symbol id="n-vc" viewBox="0 0 15 15"><path d="M1 8l4-3 4 3 4-1 1 3-3 4-6-1-4-2z" fill="#fff" stroke="#222" stroke-width="1.100"/><path d="M2 2l4-2 5 6-4 3z" fill="#5a58c8"/><path d="M3 3l4-2M4 5l4-2M6 7l4-2" stroke="#c8c8f0" stroke-width=".7"/></symbol>
    <symbol id="n-fc" viewBox="0 0 15 15"><path d="M1 10l3-2 6-1 4 4-2 3H4z" fill="#fff" stroke="#222"/><rect x="6" y="0" width="4" height="8" fill="#5a58c8"/><path d="M6 2l4-1M6 4l4-1M6 6l4-1" stroke="#c8c8f0" stroke-width=".7"/></symbol>
    <symbol id="n-pm" viewBox="0 0 15 15"><path d="M1 0h2v12h11v2H1z" fill="#eee" stroke="#555" stroke-width=".7"/><rect x="7" y="0" width="4" height="9" fill="#3840b8"/><path d="M3 6h11M3 9h11M11 3h3" stroke="#2a4ac8" stroke-width=".8" stroke-dasharray="1.500 .5"/></symbol>
    <symbol id="n-zl" viewBox="0 0 15 15"><path d="M1 1h3v7c0 3 3 4 6 4l1 3H7C3 15 1 12 1 8z" fill="#104a58"/><rect x="5" y="0" width="4" height="8" fill="#4048c0"/><path d="M9 10h5M9 13h5M10 5h4" stroke="#2a4ac8" stroke-width=".8" stroke-dasharray="1.500 .5"/></symbol>
    <symbol id="n-dr" viewBox="0 0 15 15"><path d="M1 2v12h13l-6-5z" fill="#fff" stroke="#111" stroke-width="1.200"/><path d="M5 10L12 2l3-2-2 4-6 8z" fill="#5058c8"/></symbol>
    <symbol id="n-pin" viewBox="0 0 14 14"><path d="M1 13l4-4-1-3 4-4 5 4-4 4-3-1z" fill="#e8e840" stroke="#111"/><path d="M8 2l5 4" stroke="#111" stroke-width="2"/></symbol>
  </defs>
</svg>

<div class="shell d-flex flex-column">
  <!-- title -->
  <div class="titlebar d-flex align-items-center flex-none">
    <svg width="16" height="18" viewBox="0 0 24 24"><use href="#i-start"/></svg>
    <span class="ttl">NX 8.5 - Manufacturing - [01000.02.501.302-CAM.prt (Modified) ]</span>
    <div class="baidu d-flex">
      <div class="baidu-ic d-flex align-items-center justify-content-center">
        <svg width="20" height="16" viewBox="0 0 20 16"><circle cx="10" cy="5" r="3.500" fill="none" stroke="#fff" stroke-width="2.400"/><circle cx="5" cy="11" r="3.500" fill="none" stroke="#fff" stroke-width="2.400"/><circle cx="15" cy="11" r="3.500" fill="none" stroke="#fff" stroke-width="2.400"/></svg>
      </div>
      <div class="baidu-tx flex-fill d-flex align-items-center justify-content-center">拖拽上传</div>
    </div>
    <span class="brand">SIEMENS</span>
    <div class="winbtn" style="left:1378px;width:18px">
      <svg width="16" height="16" viewBox="0 0 16 16"><path d="M3 11h8" stroke="#fff" stroke-width="2.400"/></svg>
    </div>
    <div class="winbtn" style="left:1400px;width:20px">
      <svg width="18" height="16" viewBox="0 0 18 16"><path d="M6 3h8v7M3 6h8v7H3z" fill="none" stroke="#fff" stroke-width="1.300"/></svg>
    </div>
    <div class="winbtn red" style="left:1422px;width:18px">
      <svg width="16" height="16" viewBox="0 0 16 16"><path d="M3 3l9 9M12 3l-9 9" stroke="#fff" stroke-width="2.400"/></svg>
    </div>
  </div>

  <!-- menu -->
  <div class="menubar d-flex align-items-center flex-none">
    <svg class="menu-ic" width="20" height="20" viewBox="0 0 24 24"><use href="#i-d-star"/></svg>
    <span><u>F</u>ile</span><span><u>E</u>dit</span><span><u>V</u>iew</span><span>In<u>s</u>ert</span><span>F<u>o</u>rmat</span><span><u>T</u>ools</span><span><u>A</u>ssemblies</span><span>UP SOFTWAER</span><span><u>I</u>nformation</span><span>Ana<u>l</u>ysis</span><span><u>P</u>references</span><span>Applicatio<u>n</u></span><span>Wind<u>o</u>w</span><span>GC Toolkits</span><span><u>H</u>elp</span><span>乐清虹桥</span><span>HB_MOULD <u>M</u>6.8</span>
    <div class="mdi" style="left:1382px"><svg width="16" height="15" viewBox="0 0 16 15"><path d="M4 11h7" stroke="#555" stroke-width="2"/></svg></div>
    <div class="mdi" style="left:1401px"><svg width="16" height="15" viewBox="0 0 16 15"><path d="M6 3h7v6M3 6h7v6H3z" fill="none" stroke="#555" stroke-width="1.200"/></svg></div>
    <div class="mdi" style="left:1420px"><svg width="16" height="15" viewBox="0 0 16 15"><path d="M4 3l8 8M12 3l-8 8" stroke="#555" stroke-width="2"/></svg></div>
  </div>

  <!-- toolbar row 1 -->
  <div class="tb-row d-flex flex-none">
    <div class="tb d-flex align-items-center" style="width:1285px">
      <span class="tb-grip"></span>
      <span class="tbtn"><svg><use href="#i-start"/></svg></span>
      <span class="tlabel d-flex align-items-center" style="width:40px;padding-left:1px">Start<span class="tcaret mid ms-1"></span></span>
      <span class="tbtn"><svg><use href="#i-new"/></svg></span>
      <span class="tbtn"><svg><use href="#i-open"/></svg></span>
      <span class="tbtn"><svg><use href="#i-recent"/></svg></span>
      <span class="tlabel d-flex align-items-center" style="width:125px;padding-left:1px">Open a Recent Part<span class="tcaret mid ms-1"></span></span>
      <span class="tbtn"><svg><use href="#i-save"/></svg></span>
      <span class="tbtn"><svg><use href="#i-print"/></svg></span>
      <span class="tsep"></span>
      <span class="tbtn"><svg><use href="#i-x"/></svg></span>
      <span class="tsep"></span>
      <span class="tbtn"><svg><use href="#i-undo"/></svg></span>
      <span class="tsep"></span>
      <span class="tbtn"><svg><use href="#i-find"/></svg></span>
      <span class="tlabel" style="width:104px;padding-left:1px">Command Finder</span>
      <span class="tbtn"><svg><use href="#i-refresh"/></svg></span>
      <span class="tcaret mid" style="width:14px"></span>
      <span class="tsep"></span>
      <span class="tbtn"><svg><use href="#i-vmove"/></svg></span>
      <span class="tbtn"><svg><use href="#i-swap"/></svg></span>
      <span class="tbtn"><svg><use href="#i-equal"/></svg></span>
      <span class="tbtn"><svg><use href="#i-vlist"/></svg></span>
      <span class="tsep w3"></span>
      <span class="tbtn"><svg><use href="#i-info"/></svg></span>
      <span class="tsep w8"></span>
      <span class="tbtn"><svg><use href="#i-whatsthis"/></svg></span>
      <span class="tbtn"><svg><use href="#i-help"/></svg></span>
      <span class="tcaret" style="width:12px"></span>
      <span class="tsep" style="width:10px"></span>
      <span class="tbtn"><svg><use href="#i-fit"/></svg></span>
      <span class="tcaret mid" style="width:13px"></span>
      <span class="tbtn"><svg><use href="#i-hat"/></svg></span>
      <span class="tcaret mid" style="width:12px"></span>
      <span class="tbtn"><svg><use href="#c-shade"/></svg></span>
      <span class="tbtn"><svg><use href="#c-soft"/></svg></span>
      <span class="tbtn"><svg><use href="#c-wf1"/></svg></span>
      <span class="tbtn"><svg><use href="#c-wf2"/></svg></span>
      <span class="tbtn"><svg><use href="#c-wf3"/></svg></span>
      <span class="tbtn"><svg><use href="#i-globe"/></svg></span>
      <span class="tbtn"><svg><use href="#i-rainbow"/></svg></span>
      <span class="tbtn"><svg><use href="#c-half"/></svg></span>
      <span class="tbtn"><svg><use href="#i-yinyang"/></svg></span>
      <span class="tbtn"><svg><use href="#i-clip"/></svg></span>
      <span class="tcaret" style="width:10px"></span>
    </div>
  </div>

  <!-- toolbar row 2 -->
  <div class="tb-row low d-flex flex-none">
    <div class="tb d-flex align-items-center" style="width:1078px">
      <span class="tb-grip"></span>
      <span class="tbtn"><svg><use href="#i-d-wrench"/></svg></span>
      <span class="tbtn"><svg><use href="#i-d-scissors"/></svg></span>
      <span class="tbtn"><svg><use href="#i-d-copy"/></svg></span>
      <span class="tbtn"><svg><use href="#i-graydocs"/></svg></span>
      <span class="tbtn"><svg><use href="#i-d-edit"/></svg></span>
      <span class="tbtn"><svg><use href="#i-d-x"/></svg></span>
      <span class="tbtn"><svg><use href="#i-d-list"/></svg></span>
      <span class="tbtn"><svg><use href="#i-d-info"/></svg></span>
      <span class="tbtn"><svg><use href="#i-torch"/></svg></span>
      <span class="tcaret" style="width:11px"></span>
      <span class="tsep"></span>
      <span class="tbtn" style="margin-left:5px"><svg><use href="#i-d-star"/></svg></span>
      <span class="tbtn"><svg><use href="#i-s-wrench"/></svg></span>
      <span class="tbtn"><svg><use href="#i-s-x"/></svg></span>
      <span class="tbtn"><svg><use href="#i-s-redo"/></svg></span>
      <span class="tbtn"><svg><use href="#i-check-box"/></svg></span>
      <span class="tbtn"><svg><use href="#i-s-doc"/></svg></span>
      <span class="tbtn"><svg><use href="#i-check-part"/></svg></span>
      <span class="tbtn"><svg><use href="#i-graybook"/></svg></span>
      <span class="tsep"></span>
      <span class="tbtn"><svg><use href="#i-d-arrow"/></svg></span>
      <span class="tbtn"><svg><use href="#i-d-mach"/></svg></span>
      <span class="tbtn"><svg><use href="#i-d-clock"/></svg></span>
      <span class="tcaret" style="width:10px"></span>
      <span class="tsep"></span>
      <span class="tbtn on" style="margin-left:6px"><svg><use href="#i-op-docs"/></svg></span>
      <span class="tbtn"><svg><use href="#i-op-tool"/></svg></span>
      <span class="tbtn"><svg><use href="#i-op-cube"/></svg></span>
      <span class="tbtn"><svg><use href="#i-op-wave"/></svg></span>
      <span class="tcaret" style="width:11px"></span>
      <span class="tsep"></span>
      <span class="tbtn" style="margin-left:5px"><svg><use href="#i-st-docs"/></svg></span>
      <span class="tbtn"><svg><use href="#i-st-tool"/></svg></span>
      <span class="tbtn"><svg><use href="#i-st-cube"/></svg></span>
      <span class="tbtn"><svg><use href="#i-st-wave"/></svg></span>
      <span class="tbtn"><svg><use href="#i-st-drill"/></svg></span>
      <span class="tcaret" style="width:11px"></span>
      <span class="tsep"></span>
      <span class="tbtn" style="margin-left:5px"><svg><use href="#i-d-mach"/></svg></span>
      <span class="tbtn"><svg><use href="#i-globe-xl"/></svg></span>
      <span class="tcaret" style="width:11px"></span>
    </div>
  </div>

  <!-- selection bar -->
  <div class="selbar d-flex align-items-center flex-none">
    <div class="combo flex-none" style="width:142px">No Selection Filter</div>
    <div class="combo flex-none" style="width:149px;margin-left:9px">Entire Assembly</div>
    <span class="sbtn" style="width:32px"><svg><use href="#i-s-link"/></svg></span>
    <span class="tsep w3" style="height:22px"></span>
    <span class="sbtn" style="width:23px"><svg><use href="#i-s-fil"/></svg></span>
    <span class="sbtn" style="width:24px"><svg><use href="#i-s-box"/></svg></span>
    <span class="tcaret mid" style="width:6px"></span>
    <span class="sbtn" style="width:24px"><svg><use href="#i-s-cross"/></svg></span>
    <span class="sbtn" style="width:24px"><svg><use href="#i-s-wave"/></svg></span>
    <span class="tsep" style="height:22px"></span>
    <span class="sbtn" style="width:22px"><svg><use href="#i-s-rect"/></svg></span>
    <span class="tcaret mid" style="width:11px"></span>
    <span class="tsep" style="height:22px"></span>
    <span class="sbtn" style="width:24px"><svg><use href="#i-s-snap"/></svg></span>
    <span class="sbtn on" style="width:23px"><svg><use href="#i-s-cube"/></svg></span>
    <span class="tcaret ms-auto" style="width:14px;height:20px"></span>
  </div>

  <!-- cue -->
  <div class="cuebar d-flex align-items-center flex-none">
    <span class="cue">Drag cursor to rotate view about X-Y</span>
    <span class="cdiv" style="left:683px"></span>
    <span class="cdiv" style="left:1364px"></span>
    <span class="cdiv" style="left:1384px"></span>
    <svg class="position-absolute" style="left:1423px;top:3px" width="15" height="15" viewBox="0 0 15 15"><path d="M1 1h13v13H1z" fill="none" stroke="#555" stroke-width="1.400" stroke-dasharray="4 1"/><rect x="3.500" y="4" width="8" height="7" fill="#3a7fd0"/></svg>
  </div>

  <!-- main -->
  <div class="main-row d-flex flex-none">
    <div class="side-strip d-flex flex-column flex-none">
      <div class="stab"><svg><use href="#t-geo"/></svg></div>
      <div class="stab"><svg><use href="#t-con"/></svg></div>
      <div class="stab"><svg><use href="#t-db"/></svg></div>
      <div class="stab active"><svg><use href="#t-ops"/></svg></div>
      <div class="stab"><svg><use href="#t-grid"/></svg></div>
      <div class="stab"><svg><use href="#t-mach"/></svg></div>
      <div class="stab"><svg><use href="#t-books"/></svg></div>
      <div class="stab gap"><svg><use href="#t-info"/></svg></div>
      <div class="stab gap"><svg><use href="#t-web"/></svg></div>
      <div class="stab gap2"><svg><use href="#t-clock"/></svg></div>
      <div class="stab"><svg><use href="#t-door"/></svg></div>
      <div class="stab"><svg><use href="#t-wiz"/></svg></div>
      <div class="stab"><svg><use href="#t-people"/></svg></div>
      <div class="stab"><svg><use href="#t-roll"/></svg></div>
    </div>

    <div class="nav-panel flex-none">
      <div class="nav-head d-flex align-items-center">
        <svg width="12" height="12"><use href="#n-pin"/></svg>
        <b>Operation Navigator - Program Order</b>
      </div>
      <div class="nav-frame">
        <div class="nav-scroll">
          <table class="table op-grid">
            <colgroup><col style="width:236px"><col style="width:54px"><col style="width:43px"><col style="width:96px"><col style="width:40px"><col style="width:60px"><col style="width:78px"><col style="width:7px"></colgroup>
            <thead><tr><th>Name</th><th>Geo...</th><th>Path</th><th>Tool</th><th>To...</th><th>Stock</th><th>Floor Sto...</th><th></th></tr></thead>
            <tbody id="opRows"></tbody>
          </table>
        </div>
        <div class="hscroll">
          <span class="harr" style="left:3px;border-right-color:#333;border-left:0"></span>
          <div class="hthumb">|||</div>
          <span class="harr" style="right:6px;border-left-color:#333;border-right:0"></span>
        </div>
      </div>
      <div class="splitter"><span class="split-grip"></span></div>
    </div>

    <div class="viewport">
      <svg class="model" viewBox="0 0 1260 1170" id="model">
        <g id="m-back">
          <path d="M150,395 C220,180 420,40 610,40 C870,40 1170,270 1235,560 C1255,680 1210,790 1150,890 L900,600 Z" fill="url(#gGray)" stroke="#333" stroke-width="2"/>
          <path d="M165,390 C250,200 430,95 620,95 C860,95 1125,290 1195,520 C1225,620 1195,720 1150,800 L1100,800 L600,600 Z" fill="#4a4a4a" stroke="#222"/>
          <path d="M150,390 L70,510 L48,615 L100,655 L240,700 L280,500 Z" fill="#4a4a4a" stroke="#222"/>
          <path d="M150,390 L85,495 Q75,530 110,548 L245,590 L300,480 Z" fill="#dadada" stroke="#333" stroke-width="2"/>
          <ellipse cx="155" cy="528" rx="37" ry="23" fill="#484848" stroke="#222" transform="rotate(8 155 528)"/>
          <path d="M62,575 L105,605 L240,655" fill="none" stroke="#e8e8e8" stroke-width="7"/>
          <path d="M880,880 L880,960 L1000,1005 L1090,1005 L1130,950 L1200,780 L1150,750 Z" fill="#4a4a4a" stroke="#222"/>
          <path d="M870,1035 Q950,1020 1025,985 L900,950 Z" fill="#4a4a4a"/>
          <path d="M1130,735 L1170,770 L1100,905 L1050,910 L885,885 L1000,800 Z" fill="#dadada" stroke="#333" stroke-width="2"/>
          <ellipse cx="1072" cy="860" rx="22" ry="18" fill="#444"/>
          <ellipse cx="1112" cy="770" rx="12" ry="14" fill="#444"/>
          <path d="M880,915 L1010,968 L1085,968 L1135,905" fill="none" stroke="#e8e8e8" stroke-width="7"/>
          <path d="M205,672 L245,690" stroke="#e8e8e8" stroke-width="8"/>
          <ellipse cx="800" cy="180" rx="19" ry="16" fill="#d8d8d8"/>
        </g>
        <g id="m-cut"></g>
        <g id="m-front">
          <ellipse cx="555" cy="802" rx="385" ry="310" transform="rotate(30 555 802)" fill="#484848" stroke="#d49a10" stroke-width="4"/>
          <clipPath id="boreClip"><ellipse cx="560" cy="800" rx="335" ry="280" transform="rotate(30 560 800)"/></clipPath>
          <ellipse cx="560" cy="800" rx="335" ry="280" transform="rotate(30 560 800)" fill="url(#gBore)" stroke="#222" stroke-width="2"/>
          <path clip-path="url(#boreClip)" d="M385,530 C420,650 560,790 760,800 C820,803 870,795 895,785 L930,480 L385,470 Z" fill="#ccdbe6" stroke="#222" stroke-width="2"/>
          <path d="M205,650 C190,690 185,720 188,740M240,545 C225,590 205,630 198,680" fill="none" stroke="#3ad83a" stroke-width="2"/>
          <path d="M936,885 C930,930 905,985 880,1010" fill="none" stroke="#3ad83a" stroke-width="3"/>
          <path d="M930,795 L1090,792 L1055,885 L885,885 Z" fill="#ffc800"/>
          <path d="M888,880h30M1025,880h70" stroke="#1818d8" stroke-width="4" stroke-dasharray="6 3"/>
          <path d="M190,225 C250,180 330,160 420,165 C560,172 680,225 780,300 C900,400 1010,570 1075,740 L1105,878" fill="none" stroke="#f01010" stroke-width="7"/>
          <path d="M190,225 L238,265" stroke="#ffb8e8" stroke-width="4"/>
          <path d="M66,555 L42,622" stroke="#ff60ff" stroke-width="5"/>
          <path d="M700,515 L770,285 L782,300 Z" fill="#7a80c8" opacity=".85"/>
          <path d="M712,510 L775,370 L740,420 Z" fill="#e8a8a8" opacity=".8"/>
          <path d="M725,500 L765,390" stroke="#d8b0b0" stroke-width="6" opacity=".7"/>
          <circle cx="763" cy="390" r="8" fill="#a05a5a"/>
          <path d="M412,410 L680,508 L600,486 Z" fill="#c0d8b0" stroke="#8aa890"/>
          <circle cx="458" cy="432" r="7" fill="#8aa080"/>
          <g font-family="Liberation Sans, sans-serif" font-size="33">
            <text x="718" y="265" fill="#3a50e8">ZM</text>
            <text x="722" y="343" fill="#e03030">XM</text>
            <text x="688" y="381" fill="#3a50e8">ZC</text>
            <text x="690" y="425" fill="#e03030">XC</text>
            <text x="410" y="396" fill="#708a78">YM</text>
            <text x="545" y="446" fill="#708a78">YC</text>
          </g>
        </g>
      </svg>
      <svg class="triad" viewBox="0 0 58 64">
        <text x="2" y="12" font-family="Liberation Sans, sans-serif" font-size="11" fill="#d04040">X</text>
        <path d="M14 14 L8 32 L2 48 L26 60 L34 30 L36 24 Z" fill="#dcdcdc" stroke="#a080a8"/>
        <path d="M5 38L30 50M10 26L34 36" stroke="#a080a8"/>
        <path d="M6 7L40 24" stroke="#e85050" stroke-width="3"/>
        <path d="M6 7l9 1-4 5z" fill="#c03030"/>
        <path d="M43 26L30 56" stroke="#1840e8" stroke-width="3"/>
        <path d="M33 48L21 60" stroke="#60a060"/>
        <circle cx="42" cy="25" r="3.500" fill="#f4f4f4"/>
        <text x="17" y="63" font-family="Liberation Sans, sans-serif" font-size="9" fill="#60a060">Y</text>
      </svg>
    </div>
  </div>

  <!-- bottom -->
  <div class="bottom-row d-flex flex-none">
    <div class="bottom-tb d-flex align-items-center">
      <span class="tb-grip"></span>
      <div class="combo combo-s">1</div>
      <span class="tbtn"><svg><use href="#b-layers"/></svg></span>
      <span class="tbtn"><svg><use href="#b-layers2"/></svg></span>
      <span class="tcaret mid" style="width:10px"></span>
      <span class="tbtn"><svg><use href="#b-wcs"/></svg></span>
      <span class="tcaret mid" style="width:13px"></span>
      <span class="tsep"></span>
      <span class="tbtn"><svg><use href="#b-hand"/></svg></span>
      <span class="tbtn"><svg><use href="#b-palette"/></svg></span>
      <span class="tsep"></span>
      <span class="tbtn"><svg><use href="#b-t1"/></svg></span>
      <span class="tcaret mid" style="width:12px"></span>
      <span class="tbtn"><svg><use href="#b-t1"/></svg></span>
      <span class="tbtn"><svg><use href="#b-cursor"/></svg></span>
      <span class="tbtn"><svg><use href="#b-t2"/></svg></span>
      <span class="tbtn"><svg><use href="#b-t3"/></svg></span>
      <span class="tbtn"><svg><use href="#b-t4"/></svg></span>
      <span class="tsep"></span>
      <span class="tbtn"><svg><use href="#b-grid"/></svg></span>
      <span class="tbtn"><svg><use href="#b-rgrid"/></svg></span>
      <span class="tbtn"><svg><use href="#b-frame"/></svg></span>
      <span class="tbtn"><svg><use href="#b-frameg"/></svg></span>
      <span class="tsep"></span>
      <span class="tbtn"><svg><use href="#b-hatch"/></svg></span>
      <span class="tcaret mid" style="width:12px"></span>
      <span class="tbtn"><svg><use href="#b-dim"/></svg></span>
      <span class="tcaret" style="width:12px"></span>
      <span class="tsep"></span>
      <span class="tbtn" style="margin-left:4px"><svg><use href="#b-line"/></svg></span>
      <span class="tbtn"><svg><use href="#b-lash"/></svg></span>
      <span class="tcaret mid" style="width:10px"></span>
      <span class="tsep" style="width:7px"></span>
      <span class="tbtn"><svg><use href="#b-surf"/></svg></span>
      <span class="tbtn"><svg><use href="#b-clamp"/></svg></span>
      <span class="tcaret mid" style="width:11px"></span>
      <span class="tbtn"><svg><use href="#b-vec"/></svg></span>
      <span class="tsep"></span>
      <span class="tbtn"><svg><use href="#b-cup"/></svg></span>
      <span class="tcaret mid" style="width:12px"></span>
      <span class="tbtn"><svg><use href="#b-rain"/></svg></span>
      <span class="tsep"></span>
      <span class="tbtn"><svg><use href="#b-mag"/></svg></span>
      <span class="tcaret mid" style="width:12px"></span>
      <span class="tbtn"><svg><use href="#b-sect"/></svg></span>
      <span class="tcaret mid" style="width:13px"></span>
      <span class="tcaret" style="width:14px"></span>
    </div>
    <div class="bottom-rest"></div>
  </div>
</div>

<div class="watermark d-flex">
  <svg width="73" height="82" viewBox="0 0 73 82" class="flex-none">
    <path d="M36 0L72 21V61L36 82L1 61V21Z" fill="#a4d4ee"/>
    <path d="M36 0L72 21V40C60 22 40 18 10 16Z" fill="#cde5f2"/>
    <path d="M72 21V61L52 73C66 55 68 38 58 24Z" fill="#8ccbea"/>
    <path d="M36 82L12 68C30 74 48 70 62 55L72 61Z" fill="#74c2e8"/>
    <path d="M36 21L55 32V50L36 61L19 50V32Z" fill="none" stroke="#e6e6e6" stroke-width="4"/>
    <path d="M36 27L51 35L36 44L21 35Z" fill="#bfe2f2"/>
    <path d="M21 35L36 44V58L21 49Z" fill="#a4d4ee"/>
    <path d="M51 35L36 44V58L51 49Z" fill="#74c2e8"/>
  </svg>
  <div style="padding-top:11px;margin-left:7px">
    <div class="wm-title">3D世界网</div>
    <div class="wm-sub">WWW.3DSJW.COM</div>
  </div>
</div>

<script>
  // [name, type, path state, tool, tool no, stock, floor]
  const ops = [
    ['VARIABLE_CONTOUR_2','n-vc','ok','D6-A','2','0.0000','0.0000','done'],
    ['VARIABLE_CONTOUR_1','n-vc','ok','D6','6','0.0000','0.0000'],
    ['VARIABLE_CONTOUR','n-vc','ok','D17R0.8','11','0.1500','0.1500','','sel'],
    ['VARIABLE_CONTOUR_...','n-vc','ret','D17R0.8','11','0.1500','0.1500'],
    ['PLANAR_MILL','n-pm','ok','D6-A','2','0.1000','0.0300'],
    ['PLANAR_MILL_COPY','n-pm','ret','D6-A','2','0.1000','0.0300'],
    ['PLANAR_MILL_COPY_1','n-pm','ok','D6','6','0.0000','0.0300'],
    ['PLANAR_MILL_COPY_1...','n-pm','ret','D6','6','0.0000','0.0300'],
    ['VARIABLE_CONTOUR_3','n-vc','ok','D6','6','0.0000','0.0000'],
    ['VARIABLE_CONTOUR_...','n-vc','ok','D6','6','0.0000','0.0000'],
    ['ZLEVEL_PROFILE','n-zl','ok','D6-A','2','0.0800','0.0800'],
    ['ZLEVEL_PROFILE_COPY','n-zl','ret','D6-A','2','0.0800','0.0800'],
    ['FIXED_CONTOUR','n-fc','ok','D6','6','0.0000','0.0000'],
    ['FIXED_CONTOUR_COPY','n-fc','ret','D6','6','0.0000','0.0000'],
    ['VARIABLE_CONTOUR_...','n-vc','ok','D12','9','0.0000','0.0000'],
    ['VARIABLE_CONTOUR_...','n-vc','ok','D12','9','0.0000','0.0000'],
    ['PLANAR_MILL_1','n-pm','ok','D2','5','0.0000','0.0000'],
    ['PLANAR_MILL_1_COPY','n-pm','ret','D2','5','0.0000','0.0000'],
    ['DRILLING_1','n-dr','ok','DR4.1','4','',''],
    ['DRILLING_1_COPY','n-dr','ok','DR4.1','4','',''],
    ['DRILLING_1_COPY_COPY','n-dr','ok','DR6','8','','']
  ];
  const cap = '<td class="endc"><span class="endcap"></span></td>';
  const use = (id, w, h) => `<svg width="${w}" height="${h}"><use href="#${id}"/></svg>`;
  let html = `<tr><td class="name"><div class="nm d-flex align-items-center" style="padding-left:4px;color:#24384a">NC_PROGRAM</div></td><td></td><td></td><td></td><td></td><td></td><td></td>${cap}</tr>`;
  html += `<tr><td class="name"><div class="nm d-flex align-items-center" style="padding-left:5px;color:#3c4850"><span class="expd"></span>${use('n-folder',16,14).replace('<svg','<svg style="margin:0 3px 0 5px"')}Unused Items</div></td><td></td><td></td><td></td><td></td><td></td><td></td>${cap}</tr>`;
  html += `<tr><td class="name lvb"><div class="nm d-flex align-items-center" style="padding-left:24px;color:#3c4850"><span class="expd"></span>${use('n-bulb',10,17).replace('<svg','<svg style="margin-left:9px"')}${use('n-folder',15,14).replace('<svg','<svg style="margin:0 3px 0 3px"')}4-CM</div></td><td></td><td></td><td></td><td></td><td></td><td></td>${cap}</tr>`;
  ops.forEach((o, i) => {
    const last = i === ops.length - 1 ? ' last' : '';
    const lead = o[7] ? use('n-check', 14, 14).replace('<svg','<svg style="margin-left:-1px;margin-right:-3px"') : use('n-bulb', 10, 17);
    const label = o[8] ? `<span class="hl">${o[0]}</span>` : `<span style="margin-left:3px">${o[0]}</span>`;
    html += `<tr class="${o[8] || ''}"><td class="name lv3${last}"><div class="nm d-flex align-items-center" style="padding-left:61px">${lead}${use(o[1],15,15).replace('<svg','<svg style="margin-left:4px"')}${label}</div></td>` +
      `<td>CC</td><td class="ctr"><svg><use href="#${o[2] === 'ok' ? 'n-check' : 'n-ret'}"/></svg></td><td>${o[3]}</td><td>${o[4]}</td><td>${o[5]}</td><td>${o[6]}</td>${cap}</tr>`;
  });
  for (let i = 0; i < 7; i++) html += `<tr><td class="name"></td><td></td><td></td><td></td><td></td><td></td><td></td>${cap.replace('<span class="endcap"></span>','')}</tr>`;
  document.getElementById('opRows').innerHTML = html;

  // machined surface on the part: walk along two curves and draw teeth and stripes
  function along(pts, t) {
    const segs = [];
    let total = 0;
    for (let i = 1; i < pts.length; i++) { const d = Math.hypot(pts[i][0]-pts[i-1][0], pts[i][1]-pts[i-1][1]); segs.push(d); total += d; }
    let s = t * total;
    for (let i = 0; i < segs.length; i++) {
      if (s <= segs[i] || i === segs.length - 1) { const k = s / segs[i]; return [pts[i][0] + (pts[i+1][0]-pts[i][0])*k, pts[i][1] + (pts[i+1][1]-pts[i][1])*k]; }
      s -= segs[i];
    }
  }
  const outer = [[215,270],[300,215],[400,170],[500,150],[600,148],[700,165],[800,195],[900,240],[1000,320],[1080,400],[1130,470],[1180,610]];
  const rimIn = [[270,545],[370,490],[480,470],[620,490],[730,535],[820,600],[880,670],[920,740],[925,785]];
  const rimOut = [[150,440],[235,380],[345,335],[425,325],[505,320],[620,340],[710,370],[830,420],[930,500],[1000,590],[1060,690],[1085,770]];
  const C = [640, 720];
  const cut = document.getElementById('m-cut');
  let cyan = 'M150,440 ', green = '';
  const N = 62;
  for (let i = 0; i <= N; i++) {
    const t = i / N, tip = along(outer, t);
    const nx = (tip[0]-C[0]) / Math.hypot(tip[0]-C[0], tip[1]-C[1]), ny = (tip[1]-C[1]) / Math.hypot(tip[0]-C[0], tip[1]-C[1]);
    const L = (t > .58 && t < .74) ? 46 : 18;
    const base = along(outer, Math.min(1, t + .5 / N));
    const bb = [base[0]-nx*L, base[1]-ny*L];
    cyan += `L${tip[0]},${tip[1]} L${bb[0]},${bb[1]} `;
    const nxt = along(outer, Math.max(0, t - .25 / N));
    green += `<path d="M${tip[0]},${tip[1]} L${nxt[0]-nx*L*.7},${nxt[1]-ny*L*.7} L${tip[0]-nx*L*.7},${tip[1]-ny*L*.7}Z" fill="#0be60b"/>`;
  }
  cyan += 'L1180,612 L1090,790 L930,795 L555,802 L270,545 Z';
  let stripes = '';
  const M = 30;
  for (let i = 0; i < M; i++) {
    const t = (i + .2) / M, w = .27 / M;
    const a = along(rimIn, t - w), b = along(rimIn, t + w), c = along(rimOut, t + w * 1.1), d = along(rimOut, t - w * 1.1);
    stripes += `<polygon points="${a} ${b} ${c} ${d}" fill="#0ae60a"/>`;
  }
  cut.innerHTML = `<path d="${cyan}" fill="#00ffff"/>${green}${stripes}`;
</script>
<script src="https://cdn.jsdelivr.net/npm/bootstrap@5.3.3/dist/js/bootstrap.bundle.min.js"></script>
</body>
</html>
